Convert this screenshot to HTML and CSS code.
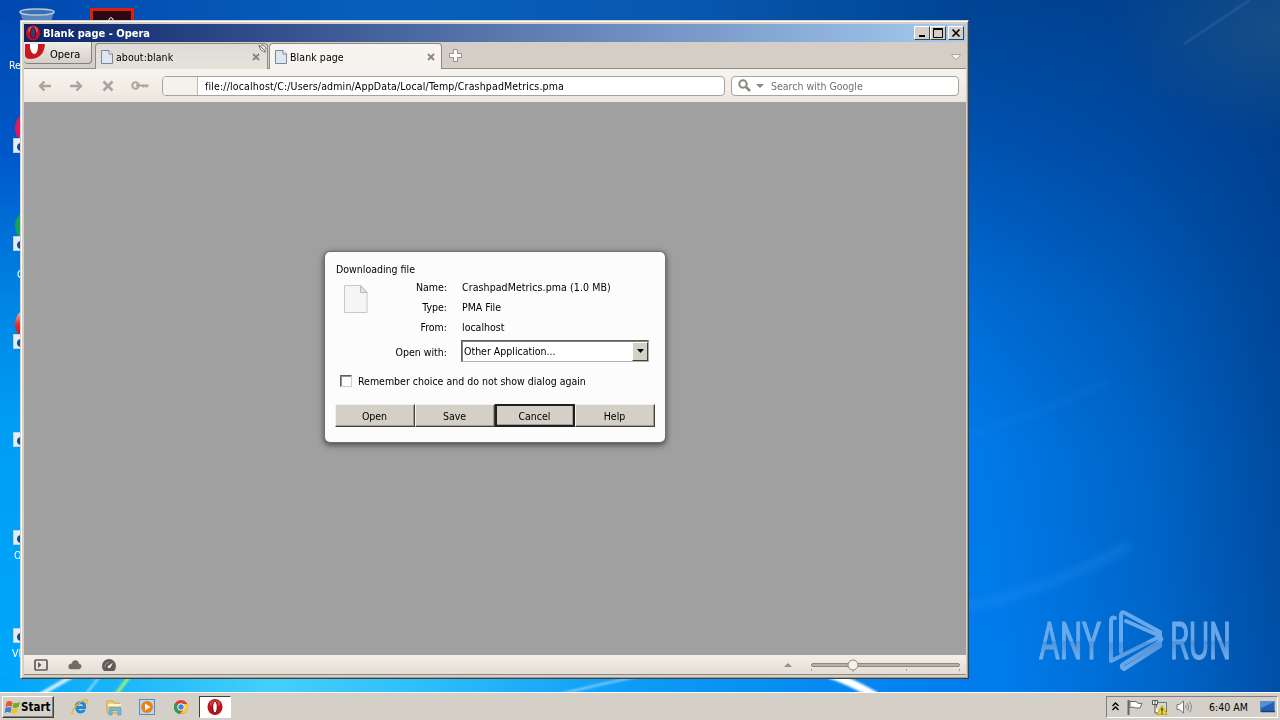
FILE: index.html
```html
<!DOCTYPE html>
<html lang="en">
<head>
  <meta charset="UTF-8" />
  <meta name="viewport" content="width=device-width, initial-scale=1.0"/>
  <title>Blank page - Opera</title>
  <link rel="stylesheet" href="styles.css">
</head>
<body>

<div class="desktop">
  <!-- Wallpaper -->
  <svg class="wallpaper" width="1280" height="692" viewBox="0 0 1280 692">
    <defs>
      <linearGradient id="sky" x1="0" y1="0" x2="0" y2="1">
        <stop offset="0" stop-color="#0048b0"/>
        <stop offset="0.22" stop-color="#0058c8"/>
        <stop offset="0.43" stop-color="#0084e4"/>
        <stop offset="0.6" stop-color="#009cf4"/>
        <stop offset="1" stop-color="#00a8fc"/>
      </linearGradient>
      <linearGradient id="top" x1="0" y1="0" x2="1" y2="0">
        <stop offset="0" stop-color="#0048b0"/>
        <stop offset="0.4" stop-color="#0860bc"/>
        <stop offset="0.7" stop-color="#0858b0"/>
        <stop offset="1" stop-color="#004494"/>
      </linearGradient>
      <linearGradient id="right" x1="0" y1="0" x2="0" y2="1">
        <stop offset="0" stop-color="#004494"/>
        <stop offset="0.22" stop-color="#0054b4"/>
        <stop offset="0.44" stop-color="#006cd4"/>
        <stop offset="0.65" stop-color="#007ae8"/>
        <stop offset="1" stop-color="#007cec"/>
      </linearGradient>
      <linearGradient id="shade" x1="0" y1="0.400" x2="1" y2="0.200">
        <stop offset="0" stop-color="#003c88" stop-opacity="0"/>
        <stop offset="0.5" stop-color="#003c88" stop-opacity="0.35"/>
        <stop offset="1" stop-color="#003c88" stop-opacity="0.85"/>
      </linearGradient>
      <radialGradient id="corner">
        <stop offset="0" stop-color="#1c5286" stop-opacity="0.8"/>
        <stop offset="1" stop-color="#1c5286" stop-opacity="0"/>
      </radialGradient>
      <linearGradient id="glow" x1="0" y1="0" x2="1" y2="0">
        <stop offset="0" stop-color="#00a4fa"/>
        <stop offset="0.11" stop-color="#18b4f8"/>
        <stop offset="0.28" stop-color="#44d0fa"/>
        <stop offset="0.45" stop-color="#2cbcfa"/>
        <stop offset="0.65" stop-color="#0c9cf6"/>
        <stop offset="1" stop-color="#007cf0"/>
      </linearGradient>
      <filter id="soft"><feGaussianBlur stdDeviation="1.2"/></filter>
      <filter id="haze"><feGaussianBlur stdDeviation="4"/></filter>
    </defs>
    <rect width="1280" height="692" fill="url(#sky)"/>
    <rect y="676" width="970" height="16" fill="url(#glow)"/>
    <rect width="968" height="22" fill="url(#top)"/>
    <rect x="968" width="312" height="692" fill="url(#right)"/>
    <rect x="968" width="312" height="692" fill="url(#shade)"/>
    <ellipse cx="1280" cy="30" rx="170" ry="110" fill="url(#corner)"/>
    <g filter="url(#haze)" fill="none" stroke="#40a8ff">
      <path d="M960 438Q1050 412 1110 380" stroke-width="5" opacity="0.12"/>
      <path d="M960 608Q1050 590 1130 545" stroke-width="8" opacity="0.22"/>
    </g>
    <g filter="url(#soft)" fill="none" stroke="#fff">
      <path d="M1184 44L1250 0" stroke="#5a8cc0" stroke-width="1.5" opacity="0.5"/>
      <path d="M38 696L76 674" stroke-width="4" opacity="0.8"/>
      <path d="M86 694L100 676" stroke-width="2" opacity="0.6"/>
      <path d="M116 694L130 676" stroke="#a8f070" stroke-width="3"/>
      <path d="M560 694Q600 684 640 676" stroke-width="2" opacity="0.5"/>
      <path d="M828 674Q848 680 876 696" stroke-width="8"/>
    </g>
  </svg>

  <!-- Desktop icons, mostly hidden by the window -->
  <svg class="icon-peek bin" width="36" height="14" viewBox="0 0 36 14">
    <path d="M1 4L4 14H32L35 4" fill="#6b94c4" opacity="0.8"/>
    <ellipse cx="18" cy="4" rx="17" ry="3" fill="#3870b4" stroke="#b8c8d8" stroke-width="1.5"/>
  </svg>
  <svg class="icon-peek acrobat" width="44" height="14" viewBox="0 0 44 14">
    <rect x="1.5" y="1.5" width="41" height="30" fill="#2a0a10" stroke="#e01e10" stroke-width="3"/>
    <path d="M19 14V11Q21 8 23 11V14" fill="none" stroke="#fff"/>
  </svg>
  <span class="icon-label recycle">Re</span>
  <div class="blob pink"></div>
  <div class="blob green"></div>
  <div class="blob red"></div>
  <div class="shortcut s1"></div>
  <div class="shortcut s2"></div>
  <div class="shortcut s3"></div>
  <div class="shortcut s4"></div>
  <div class="shortcut s5"></div>
  <div class="shortcut s6"></div>
  <span class="icon-label ccleaner">C</span>
  <span class="icon-label opera-label">O</span>
  <span class="icon-label vlc">VL</span>

  <!-- Watermark -->
  <svg class="watermark" width="210" height="70" viewBox="0 0 210 70">
    <defs>
      <linearGradient id="wm" x1="0" y1="0" x2="0" y2="66" gradientUnits="userSpaceOnUse">
        <stop offset="0.5" stop-color="#78b2ee"/>
        <stop offset="0.53" stop-color="#5c9add"/>
        <stop offset="1" stop-color="#84b8ec"/>
      </linearGradient>
      <linearGradient id="wmText" x1="0" y1="-28" x2="0" y2="0" gradientUnits="userSpaceOnUse">
        <stop offset="0.48" stop-color="#78b2ee"/>
        <stop offset="0.52" stop-color="#5c9add"/>
        <stop offset="1" stop-color="#84b8ec"/>
      </linearGradient>
    </defs>
    <g fill="url(#wmText)" stroke="url(#wmText)" stroke-width="0.900" transform="translate(4 51) scale(1 1.280)">
      <text x="0" y="0" textLength="62" lengthAdjust="spacingAndGlyphs">ANY</text>
      <text x="131" y="0" textLength="61" lengthAdjust="spacingAndGlyphs">RUN</text>
    </g>
    <g fill="none" stroke="url(#wm)" stroke-width="4" stroke-linejoin="round" stroke-linecap="round">
      <path d="M80 10Q76 8 76 13V53L124 29"/>
      <path d="M86 44V7Q86 3 90 5L125 24V28L91 13"/>
      <path d="M124 28Q129 31 124 34L90 55Q84 58 89 61L125 38V31"/>
    </g>
  </svg>

  <!-- Browser window -->
  <div class="window">
    <div class="title-bar">
      <svg width="16" height="16" viewBox="0 0 16 16">
        <ellipse cx="8" cy="8" rx="7" ry="7.500" fill="#c81018"/>
        <ellipse cx="8" cy="5" rx="5" ry="3.500" fill="#f08080" opacity="0.6"/>
        <ellipse cx="8" cy="8" rx="2.600" ry="5.500" fill="#24408c" stroke="#700008"/>
      </svg>
      <span class="title">Blank page - Opera</span>
      <div class="controls">
        <button class="ctl"><svg width="14" height="12"><path d="M4 9H10" stroke="#000" stroke-width="2"/></svg></button>
        <button class="ctl"><svg width="14" height="12"><path d="M2.500 2.500H11.500V10.500H2.500ZM2 1.500H12" fill="none" stroke="#000"/></svg></button>
        <button class="ctl close"><svg width="14" height="12"><path d="M3.500 2.500L10.500 9.500M10.500 2.500L3.500 9.500" stroke="#000" stroke-width="1.700"/></svg></button>
      </div>
    </div>

    <div class="tab-bar">
      <button class="menu-button">
        <svg width="22" height="16" viewBox="0 0 22 16">
          <path d="M1 0H21Q20 14 7 15Q1 15 1 11Z" fill="#c81820"/>
          <path d="M6 0H14V4Q13 10 10 10Q7 9 6 4Z" fill="#fff"/>
        </svg>
        <span>Opera</span>
      </button>
      <div class="tab">
        <svg width="12" height="14" viewBox="0 0 12 14"><path d="M.5.500H8L11.500 4V13.500H.5Z" fill="#dfe6f0" stroke="#76869c"/><path d="M8 .5V4H11.500" fill="#fff" stroke="#76869c"/></svg>
        <span>about:blank</span>
        <svg class="tab-close" width="8" height="8" viewBox="0 0 8 8"><path d="M1 1L7 7M7 1L1 7" stroke="#888680" stroke-width="1.800"/></svg>
        <svg class="fold" width="9" height="9" viewBox="0 0 9 9"><path d="M1 1L8 8Q2 8 1 1ZM3 1Q8 1 8 6" fill="#f4f2ee" stroke="#75716a"/></svg>
      </div>
      <div class="tab active">
        <svg width="12" height="14" viewBox="0 0 12 14"><path d="M.5.500H8L11.500 4V13.500H.5Z" fill="#dfe6f0" stroke="#76869c"/><path d="M8 .5V4H11.500" fill="#fff" stroke="#76869c"/></svg>
        <span>Blank page</span>
        <svg class="tab-close" width="8" height="8" viewBox="0 0 8 8"><path d="M1 1L7 7M7 1L1 7" stroke="#888680" stroke-width="1.800"/></svg>
      </div>
      <svg class="new-tab" width="13" height="13" viewBox="0 0 13 13"><path d="M4.500.5H8.500V4.500H12.500V8.500H8.500V12.500H4.500V8.500H.5V4.500H4.500Z" fill="#faf9f6" stroke="#96928a"/></svg>
      <svg class="tab-menu" width="10" height="6" viewBox="0 0 10 6"><path d="M1 .5H9V2L5 5.500L1 2Z" fill="#f4f2ee" stroke="#aaa69e"/></svg>
    </div>

    <div class="toolbar">
      <div class="nav">
        <svg width="14" height="12" viewBox="0 0 14 12"><path d="M13 6H2M6.500 1.500L2 6L6.500 10.500" fill="none" stroke="#a8a49e" stroke-width="2.400"/></svg>
        <svg width="14" height="12" viewBox="0 0 14 12"><path d="M1 6H12M7.500 1.500L12 6L7.500 10.500" fill="none" stroke="#a8a49e" stroke-width="2.400"/></svg>
        <svg width="12" height="12" viewBox="0 0 12 12"><path d="M1.500 1.500L10.500 10.500M10.500 1.500L1.500 10.500" stroke="#a8a49e" stroke-width="2.500"/></svg>
        <svg width="18" height="9" viewBox="0 0 18 9"><circle cx="4.500" cy="4.500" r="3.200" fill="none" stroke="#a8a49e" stroke-width="2"/><path d="M5 4.500H17.500M12.500 4V6.500M15.500 4V6.500" stroke="#a8a49e" stroke-width="2"/></svg>
      </div>
      <div class="address">
        <div class="badge"></div>
        <span>file://localhost/C:/Users/admin/AppData/Local/Temp/CrashpadMetrics.pma</span>
      </div>
      <div class="search">
        <svg width="13" height="13" viewBox="0 0 13 13"><circle cx="5" cy="5" r="3.700" fill="none" stroke="#8a8680" stroke-width="2"/><path d="M8 8L12 12" stroke="#8a8680" stroke-width="2.500"/></svg>
        <svg width="8" height="4" viewBox="0 0 8 4"><path d="M0 0H8L4 4Z" fill="#8a8680"/></svg>
        <span>Search with Google</span>
      </div>
    </div>

    <div class="content">
      <div class="dialog">
        <div class="dialog-title">Downloading file</div>
        <div class="details">
          <svg class="file-icon" width="24" height="28" viewBox="0 0 24 28"><path d="M.5.500H17L23 7V27.500H.5Z" fill="#f5f5f5" stroke="#c8c8c8"/><path d="M16.500 1V7.500H23Z" fill="#e4e4e4" stroke="#bbb"/></svg>
          <div class="fields">
            <span class="key">Name:</span><span class="file-name">CrashpadMetrics.pma (1.0 MB)</span>
            <span class="key">Type:</span><span>PMA File</span>
            <span class="key">From:</span><span>localhost</span>
            <span class="key">Open with:</span>
            <div class="select">
              <span>Other Application...</span>
              <div class="arrow"><svg width="7" height="4"><path d="M0 0H7L3.500 4Z"/></svg></div>
            </div>
          </div>
        </div>
        <div class="remember">
          <div class="checkbox"></div>
          <span>Remember choice and do not show dialog again</span>
        </div>
        <div class="buttons">
          <button>Open</button>
          <button>Save</button>
          <button class="default">Cancel</button>
          <button>Help</button>
        </div>
      </div>
    </div>

    <div class="status-bar">
      <svg width="14" height="12" viewBox="0 0 14 12"><rect x="1" y="1" width="12" height="10" rx="1" fill="none" stroke="#605c58" stroke-width="1.700"/><path d="M4 3L7.500 6L4 9Z" fill="#605c58"/></svg>
      <svg width="14" height="11" viewBox="0 0 15 11"><path d="M3 10.500Q0 10 .5 7Q1 4.500 4 4.500Q5 .5 8.500 1Q11.500 1.500 11.500 4.500Q14.500 5 14.500 7.500Q14.500 10 12 10.500Z" fill="#706c68"/></svg>
      <svg width="14" height="12" viewBox="0 0 14 12"><path d="M2 12Q0 10 0 7A7 7 0 0 1 14 7Q14 10 12 12Z" fill="#605c58"/><path d="M5.500 7.500L11 3.500L8.500 8.500Q6.500 10.500 5.500 7.500Z" fill="#eee"/><path d="M2.800 8Q3 4 7 3" fill="none" stroke="#aaa" stroke-width=".8"/></svg>
      <div class="zoom">
        <svg width="8" height="4" viewBox="0 0 8 4"><path d="M0 4H8L4 0Z" fill="#97918b"/></svg>
        <svg width="149" height="14" viewBox="0 0 149 14">
          <rect x=".5" y="5.500" width="148" height="3" rx="1.500" fill="#b8b0a8" stroke="#8e8680"/>
          <path d="M.5 11V13M95.500 11V13M148.500 11V13" stroke="#a49c94"/>
          <circle cx="42" cy="7" r="5" fill="#f4f0ea" stroke="#8e8680"/>
          <path d="M42 12V14" stroke="#a49c94"/>
        </svg>
      </div>
    </div>
  </div>
</div>

<!-- Taskbar -->
<div class="taskbar">
  <button class="start">
    <svg width="17" height="16" viewBox="0 0 16 16">
      <path d="M2 3Q5 1 8 3L7 8Q4 6 1 8Z" fill="#e85820"/>
      <path d="M9 3.500Q12 5 15.500 3L14 8Q11 9.500 8 8.500Z" fill="#68b030"/>
      <path d="M1 9Q4 7 7 9L6 14Q3 12 0 14Z" fill="#3c80d8"/>
      <path d="M8 9.500Q11 10.500 14 9L12.500 14Q10 15.500 7 14Z" fill="#f8c020"/>
    </svg>
    <span>Start</span>
  </button>
  <div class="quick-launch">
    <svg width="18" height="18" viewBox="0 0 18 18"><path d="M15 9.500H5.500Q6 14 9.500 14Q12 14 13.500 12" fill="none" stroke="#2088d8" stroke-width="2.800"/><path d="M5 10Q5 5 9.500 4.500Q14 5 13.700 9" fill="none" stroke="#2088d8" stroke-width="2.800"/><path d="M2 16Q-1 15 5 8Q13 0 16 2Q17 3 15 6" fill="none" stroke="#e8b828" stroke-width="1.500"/></svg>
    <svg width="18" height="18" viewBox="0 0 18 18"><path d="M2 3H8L9 5H15V15H2Z" fill="#f0d070" stroke="#c8a850"/><path d="M3 7H16" stroke="#fff6c0" stroke-width="2"/><path d="M4 17V11Q4 9.500 6 9.500H14Q16 9.500 16 11V17H13V12.500H7V17Z" fill="#78b8e0" stroke="#5898c8" stroke-width=".7"/></svg>
    <svg width="18" height="18" viewBox="0 0 18 18"><rect x="1.500" y="1.500" width="15" height="15" fill="#b8d8f4" stroke="#5a8cc4"/><circle cx="9" cy="9" r="6" fill="#f08010"/><path d="M7 5.500L12.500 9L7 12.500Z" fill="#fff"/></svg>
    <svg width="18" height="18" viewBox="0 0 18 18"><circle cx="9" cy="9" r="7" fill="#e04030"/><path d="M3 5L9 9L8 16Q2 15 2 9Q2 6 3 5Z" fill="#30a050"/><path d="M15.500 6H9L12 11L8 16Q16 16 16 9Q16 7 15.500 6Z" fill="#f8cc30"/><circle cx="9" cy="9" r="3.300" fill="#4080e0" stroke="#fff"/></svg>
  </div>
  <div class="task-button">
    <svg width="16" height="16" viewBox="0 0 16 16"><ellipse cx="8" cy="8" rx="7.500" ry="8" fill="#c01018"/><ellipse cx="8" cy="4.500" rx="5.500" ry="3.500" fill="#e86868" opacity=".5"/><ellipse cx="8" cy="8" rx="2.300" ry="6" fill="#fff" stroke="#700008"/></svg>
  </div>
  <div class="tray">
    <svg width="7" height="9" viewBox="0 0 7 9"><path d="M.5 4L3.500 1L6.500 4M.5 8L3.500 5L6.500 8" fill="none" stroke="#000" stroke-width="1.400"/></svg>
    <svg width="16" height="16" viewBox="0 0 16 16"><path d="M1.500 1V16" stroke="#666" stroke-width="2"/><path d="M3 2.500H9Q10 5 15 4.500L13 9H8.500Q7.500 7.500 3 8.500Z" fill="#fff" stroke="#666"/></svg>
    <svg width="17" height="16" viewBox="0 0 17 16"><rect x="5.500" y="3.500" width="10" height="9" fill="#d8dcc8" stroke="#777"/><path d="M1.500 1.500H6.500V5.500H1.500ZM4 2V5M4 6V14H8" fill="#fff" stroke="#555"/><path d="M11 6.500L16 15.500H6Z" fill="#f8d820" stroke="#b89000" stroke-width=".7"/><path d="M11 9V12.500M11 13.500V14.700" stroke="#222" stroke-width="1.300"/></svg>
    <svg width="17" height="14" viewBox="0 0 17 14"><path d="M1 4.500H3.500L7.500 1V13L3.500 9.500H1Z" fill="#fff" stroke="#777"/><path d="M9.500 5Q11 7 9.500 9M11.500 3Q14 7 11.500 11M13.500 1.500Q17.500 7 13.500 12.500" fill="none" stroke="#888"/></svg>
    <span class="clock">6:40 AM</span>
    <svg width="16" height="12" viewBox="0 0 16 12"><rect x=".5" y=".5" width="14" height="10" fill="#2060b8" stroke="#6c8cb8"/><path d="M1 1H14L1 7Z" fill="#4c90dc"/><path d="M1 10.500H15" stroke="#1c3c70" stroke-width="1.500"/></svg>
  </div>
</div>

</body>
</html>
```
FILE: styles.css
```css
* {
  box-sizing: border-box;
}

body {
  margin: 0;
  width: 1280px;
  height: 720px;
  overflow: hidden;
  display: flex;
  flex-direction: column;
  font-family: "DejaVu Sans Condensed", "DejaVu Sans", sans-serif;
  font-size: 10.5px;
  color: #000;
}

svg {
  display: block;
  flex: none;
}

span {
  white-space: nowrap;
}

button {
  font: inherit;
  color: inherit;
  margin: 0;
  padding: 0;
  border: none;
  background: #d4d0c8;
}

.desktop {
  position: relative;
  height: 692px;
  flex: none;
  overflow: hidden;
}

/* Desktop items */
.icon-peek,
.icon-label,
.blob,
.shortcut,
.watermark {
  position: absolute;
}

.bin { left: 19px; top: 8px; }
.acrobat { left: 90px; top: 8px; }

.icon-label {
  color: #fff;
  line-height: 14px;
}

.recycle { left: 9px; top: 58px; }
.ccleaner { left: 17px; top: 267px; }
.opera-label { left: 14px; top: 548px; }
.vlc { left: 12px; top: 646px; }

.blob {
  left: 15px;
  width: 30px;
  height: 32px;
  border-radius: 50%;
}

.pink { top: 112px; background: #e01860; }
.green { top: 210px; background: #18a058; }
.red { top: 308px; background: linear-gradient(#eee, #e03028 50%, #c01820); }

.shortcut {
  left: 13px;
  width: 14px;
  height: 15px;
  background: radial-gradient(circle at 7px 8px, #1c4888 3.5px, #e4eef8 4.5px);
  border: 1px solid #b8d0e4;
}

.s1 { top: 138px; }
.s2 { top: 236px; }
.s3 { top: 334px; }
.s4 { top: 432px; }
.s5 { top: 530px; }
.s6 { top: 628px; }

.watermark {
  left: 1035px;
  top: 608px;
  font-family: Roboto, sans-serif;
  font-size: 40px;
  opacity: 0.88;
}

/* Window */
.window {
  position: absolute;
  left: 20px;
  top: 20px;
  width: 949px;
  height: 659px;
  padding: 3px 2px 3px 3px;
  display: flex;
  flex-direction: column;
  background: #d4d0c8;
  border: 1px solid #d4d0c8;
  border-right-color: #404040;
  border-bottom-color: #404040;
  box-shadow: inset 1px 1px 0 #fff, inset -1px -1px 0 #a09c94;
}

.title-bar {
  display: flex;
  align-items: center;
  height: 18px;
  flex: none;
  padding: 0 2px 0 1px;
  background: linear-gradient(to right, #0a246a, #a6caf0);
  color: #fff;
}

.title {
  margin-left: 2px;
  font-weight: bold;
  font-size: 11px;
}

.controls {
  display: flex;
  margin-left: auto;
}

.ctl {
  width: 16px;
  height: 14px;
  background: #d4d0c8;
  border: 1px solid;
  border-color: #fff #404040 #404040 #fff;
}

.close {
  margin-left: 2px;
}

/* Tabs */
.tab-bar {
  display: flex;
  height: 27px;
  flex: none;
  background: #d4cec6;
  border-bottom: 1px solid #8e8a82;
}

.menu-button {
  display: flex;
  width: 68px;
  height: 22px;
  background: linear-gradient(#f0eeea, #d4d0c8);
  border: 1px solid #858178;
  border-top: none;
  border-left: none;
  border-radius: 0 0 4px 4px;
}

.menu-button svg {
  margin-top: 2px;
}

.menu-button span {
  margin: 6px 0 0 4px;
  font-size: 11px;
}

.tab {
  position: relative;
  display: flex;
  align-items: center;
  width: 173px;
  height: 26px;
  margin: 1px 0 0 3px;
  padding: 0 7px 0 5px;
  background: linear-gradient(#dedad4, #e6e2dc);
  border: 1px solid #8e8a82;
  border-bottom: none;
  border-radius: 4px 4px 0 0;
}

.tab span {
  margin-left: 3px;
  letter-spacing: 0.080px;
}

.tab-close {
  margin-left: auto;
}

.fold {
  position: absolute;
  right: 0;
  top: 0;
}

.tab.active {
  margin-left: 1px;
  padding-right: 6px;
  background: #f7f4ef;
}

.new-tab {
  margin: 7px 0 0 7px;
}

.tab-menu {
  margin: 12px 5px 0 auto;
}

/* Address row */
.toolbar {
  display: flex;
  align-items: center;
  height: 34px;
  flex: none;
  padding: 0 7px 0 14px;
  background: linear-gradient(#f7f4ef, #ede6de);
  border-bottom: 1px solid #a8a4a0;
}

.nav {
  display: flex;
  align-items: center;
  width: 124px;
  gap: 17px;
}

.nav svg:nth-child(3) {
  margin-left: 2px;
}

.address,
.search {
  display: flex;
  align-items: center;
  height: 20px;
  background: #fff;
  border: 1px solid #a8a29a;
  border-radius: 4px;
}

.address {
  width: 563px;
  overflow: hidden;
}

.badge {
  width: 35px;
  height: 18px;
  background: #f5f1ec;
  border-right: 1px solid #c0bab4;
}

.address span {
  margin-left: 7px;
  letter-spacing: 0.155px;
}

.search {
  width: 228px;
  margin-left: 6px;
  padding-left: 6px;
  color: #707070;
}

.search svg + svg {
  margin: 0 7px 0 5px;
}

.content {
  position: relative;
  flex: 1;
  background: #a0a0a0;
}

/* Download dialog */
.dialog {
  position: absolute;
  left: 301px;
  top: 149px;
  width: 340px;
  height: 190px;
  padding: 10px;
  background: #fcfcfc;
  border-radius: 5px;
  box-shadow: 0 0 1px 1px #707070, 0 2px 6px 1px #444;
}

.dialog-title {
  height: 15px;
  padding-left: 1px;
  line-height: 14px;
}

.details {
  display: flex;
  padding-left: 9px;
}

.file-icon {
  margin-top: 8px;
}

.fields {
  display: grid;
  grid-template-columns: 79px 188px;
  grid-template-rows: 20px 20px 20px 29px;
  column-gap: 14px;
  align-items: center;
}

.fields > span:not(.key) {
  padding-left: 1px;
}

.file-name {
  letter-spacing: 0.090px;
}

.key {
  text-align: right;
}

.select {
  display: flex;
  align-items: center;
  justify-content: space-between;
  width: 188px;
  height: 22px;
  margin-top: -1px;
  padding-left: 2px;
  background: #fff;
  border: 1px solid;
  border-color: #606060 #b4b0a8 #b4b0a8 #606060;
  box-shadow: inset 1px 1px 0 #808080;
}

.arrow {
  display: flex;
  align-items: center;
  justify-content: center;
  width: 16px;
  height: 19px;
  background: #d4d0c8;
  border: 1px solid;
  border-color: #fff #404040 #404040 #fff;
}

.remember {
  display: flex;
  align-items: center;
  height: 14px;
  margin-top: 8px;
  padding-left: 5px;
}

.checkbox {
  width: 12px;
  height: 12px;
  margin-right: 6px;
  background: #fff;
  border: 1px solid;
  border-color: #606060 #d0ccc6 #d0ccc6 #606060;
  box-shadow: inset 1px 1px 0 #909090;
}

.buttons {
  display: flex;
  margin-top: 16px;
}

.buttons button {
  width: 80px;
  height: 23px;
  padding-right: 1px;
  border: 1px solid;
  border-color: #f4f2ee #404040 #404040 #f4f2ee;
  box-shadow: inset -1px -1px 0 #a09c94;
}

.buttons .default {
  border: 2px solid #202020;
}

/* Status bar */
.status-bar {
  display: flex;
  align-items: center;
  height: 20px;
  flex: none;
  padding: 0 6px 0 10px;
  gap: 20px;
  background: linear-gradient(#f4efe9, #e6ddd4);
  border-bottom: 1px solid #8c8880;
}

.zoom {
  display: flex;
  align-items: center;
  gap: 19px;
  margin-left: auto;
}

/* Taskbar */
.taskbar {
  display: flex;
  align-items: center;
  height: 28px;
  padding: 1px 2px 1px 2px;
  background: #d4d0c8;
  border-top: 1px solid #fff;
}

.start {
  display: flex;
  align-items: center;
  width: 52px;
  height: 22px;
  padding-left: 1px;
  font-size: 11.5px;
  font-weight: bold;
  border: 1px solid;
  border-color: #fff #404040 #404040 #fff;
  box-shadow: inset -1px -1px 0 #808080;
}

.quick-launch {
  display: flex;
  gap: 15.500px;
  margin-left: 17px;
}

.task-button {
  display: flex;
  align-items: center;
  justify-content: center;
  width: 32px;
  height: 22px;
  margin-left: 9px;
  background: #fff;
  border: 1px solid;
  border-color: #404040 #fff #fff #404040;
}

.tray {
  display: flex;
  align-items: center;
  width: 172px;
  height: 22px;
  margin-left: auto;
  padding-left: 5px;
  border: 1px solid;
  border-color: #808080 #fff #fff #808080;
}

.tray svg + svg {
  margin-left: 8px;
}

.clock {
  width: 41px;
  margin: 0 10px 0 16px;
}
```
